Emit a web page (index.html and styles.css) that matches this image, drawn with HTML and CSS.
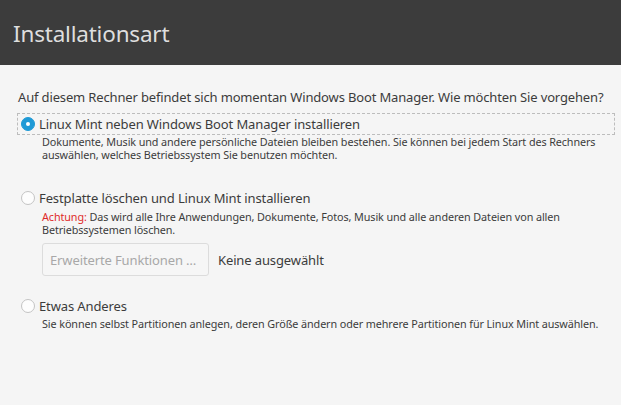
FILE: index.html
```html
<!DOCTYPE html>
<html lang="de">
<head>
<meta charset="utf-8">
<title>Installationsart</title>
<link rel="stylesheet" href="styles.css">
</head>
<body>
<header class="topbar">
  <h1 class="title">Installationsart</h1>
</header>
<main class="content">
  <p class="question">Auf diesem Rechner befindet sich momentan Windows Boot Manager. Wie möchten Sie vorgehen?</p>

  <div class="option first">
    <label class="choice focused">
      <span class="radio checked"></span>
      <span class="choice-label">Linux Mint neben Windows Boot Manager installieren</span>
    </label>
    <p class="desc">Dokumente, Musik und andere persönliche Dateien bleiben bestehen. Sie können bei jedem Start des Rechners<br>auswählen, welches Betriebssystem Sie benutzen möchten.</p>
  </div>

  <div class="option second">
    <label class="choice">
      <span class="radio"></span>
      <span class="choice-label">Festplatte löschen und Linux Mint installieren</span>
    </label>
    <p class="desc"><span class="warn">Achtung:</span> Das wird alle Ihre Anwendungen, Dokumente, Fotos, Musik und alle anderen Dateien von allen<br>Betriebssystemen löschen.</p>
    <div class="advanced">
      <button class="btn" disabled>Erweiterte Funktionen …</button>
      <span class="status">Keine ausgewählt</span>
    </div>
  </div>

  <div class="option third">
    <label class="choice">
      <span class="radio"></span>
      <span class="choice-label">Etwas Anderes</span>
    </label>
    <p class="desc">Sie können selbst Partitionen anlegen, deren Größe ändern oder mehrere Partitionen für Linux Mint auswählen.</p>
  </div>
</main>
</body>
</html>
```

FILE: styles.css
```css
html, body {
  margin: 0;
  padding: 0;
}
body {
  background: #f5f5f5;
  color: #3c3c3c;
  font-family: "Noto Sans", "Open Sans", sans-serif;
  width: 621px;
  height: 405px;
  overflow: hidden;
}
.topbar {
  height: 65px;
  background: #3c3c3c;
  display: flex;
  align-items: center;
  padding-left: 13px;
}
.title {
  margin: 1px 0 0;
  font-weight: 400;
  font-size: 22.5px;
  color: #dedede;
  letter-spacing: -0.2px;
}
.content {
  padding: 0 6px 0 17px;
}
.question {
  margin: 23px 0 0 1px;
  font-size: 13px;
  line-height: 18px;
  letter-spacing: -0.15px;
}
.option {
  display: flex;
  flex-direction: column;
}
.choice {
  display: flex;
  align-items: center;
  gap: 4px;
  height: 20px;
  padding: 0 3px;
  border: 1px dashed transparent;
  font-size: 13px;
  letter-spacing: -0.12px;
}
.choice.focused {
  border-color: #bdbdbd;
  margin-top: 7px;
}
.radio {
  width: 12px;
  height: 12px;
  border-radius: 50%;
  border: 1px solid #c4c4c4;
  background: #fdfdfd;
  box-sizing: content-box;
  flex: none;
  position: relative;
}
.radio.checked {
  background: #1f9ad6;
  border-color: #1f9ad6;
}
.radio.checked::after {
  content: "";
  position: absolute;
  left: 4px;
  top: 4px;
  width: 4px;
  height: 4px;
  border-radius: 50%;
  background: #ffffff;
}
.desc {
  margin: 0 0 0 25px;
  font-size: 10.8px;
  line-height: 13px;
  letter-spacing: -0.1px;
}
.second .desc {
  margin-top: 1px;
}
.warn {
  color: #df2a2a;
}
.second {
  margin-top: 26px;
}
.third {
  margin-top: 19px;
}
.advanced {
  display: flex;
  align-items: center;
  gap: 9px;
  margin: 7px 0 0 25px;
}
.btn {
  width: 167px;
  height: 33px;
  border: 1px solid #dcdcdc;
  border-radius: 3px;
  background: #f6f6f6;
  color: #a8a8a8;
  font-family: inherit;
  font-size: 13px;
  letter-spacing: -0.12px;
  text-align: left;
  padding: 0 0 0 7px;
}
.status {
  font-size: 13px;
  letter-spacing: -0.12px;
}
```
